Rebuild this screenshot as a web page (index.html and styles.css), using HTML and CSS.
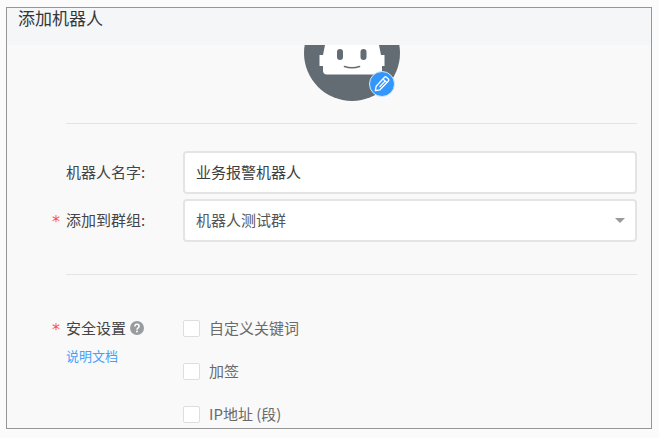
FILE: index.html
```html
<!DOCTYPE html>
<html lang="zh-CN">
<head>
    <meta charset="UTF-8">
    <meta name="viewport" content="width=device-width, initial-scale=1.0">
    <title>添加机器人</title>
    <link rel="stylesheet" href="styles.css">
</head>
<body>
    <div class="dialog">
        <h1 class="dialog-title">添加机器人</h1>

        <form class="robot-form">
            <div class="avatar-area">
                <div class="avatar">
                    <svg class="avatar-img" viewBox="0 0 96 96" aria-hidden="true">
                        <circle cx="48" cy="48" r="48" fill="#646c73"/>
                        <path d="M28 28h40q5 5 7 12l2 10h3.500v11H78v4.500q0 4-4 4H23q-4 0-4-4V61h-3.500V50H19l2-10q2-7 7-12z" fill="#fff"/>
                        <rect x="33" y="44" width="6" height="11" rx="3" fill="#646c73"/>
                        <rect x="56.500" y="44" width="6" height="11" rx="3" fill="#646c73"/>
                        <path d="M40.500 61.500q7.500 2.500 15 0" fill="none" stroke="#646c73" stroke-width="1.600" stroke-linecap="round"/>
                    </svg>
                    <button class="avatar-edit" type="button" aria-label="修改头像">
                        <svg width="26" height="26" viewBox="0 0 26 26" fill="none" stroke="#fff" stroke-width="1.300" stroke-linejoin="round">
                            <circle cx="13" cy="13" r="12.500" fill="#3296fa" stroke="#d5e8fb" stroke-width="1"/>
                            <path d="M6.300 19.700l.9-4.500 8.300-8.900q1-1 2 0l1.900 1.700q1 1 0 2L11 18.800z"/>
                            <path d="M14 8l4 3.700M15.800 10.400l-5.300 5.600"/>
                        </svg>
                    </button>
                </div>
            </div>

            <hr class="divider">

            <div class="fields">
                <label class="label" for="robotName">机器人名字:</label>
                <input class="control" id="robotName" type="text" value="业务报警机器人">

                <label class="label required" for="robotGroup">添加到群组:</label>
                <div class="select-box">
                    <select class="control" id="robotGroup">
                        <option>机器人测试群</option>
                    </select>
                </div>
            </div>

            <hr class="divider">

            <div class="security">
                <div class="security-info">
                    <div class="label required" id="securityLabel">安全设置
                        <svg class="help" viewBox="0 0 14 14" aria-hidden="true">
                            <circle cx="7" cy="7" r="7" fill="#999c9f"/>
                            <path d="M4.900 5.500q0-2.200 2.100-2.200t2.100 1.900q0 1-1 1.700T7 8.700" fill="none" stroke="#fff" stroke-width="1.500"/>
                            <circle cx="7" cy="10.600" r="1" fill="#fff"/>
                        </svg>
                    </div>
                    <a class="doc-link" href="#">说明文档</a>
                </div>
                <div class="options" role="group" aria-labelledby="securityLabel">
                    <label class="option"><input type="checkbox">自定义关键词</label>
                    <label class="option"><input type="checkbox">加签</label>
                    <label class="option"><input type="checkbox">IP地址 (段)</label>
                </div>
            </div>
        </form>
    </div>
</body>
</html>
```

FILE: styles.css
```css
* {
    box-sizing: border-box;
}

body {
    margin: 0;
    padding: 7px 7px 0 6px;
    background-color: #fbfbfb;
    color: #444;
    font-family: "Noto Sans CJK SC", "Noto Sans", sans-serif;
    font-size: 15px;
    line-height: 22px;
}

.dialog {
    border: 1px solid #969696;
    background-color: #f9f9f9;
}

.dialog-title {
    margin: 0;
    padding: 0 11px 17px;
    background-color: #f4f6f8;
    color: #333537;
    font-size: 17px;
    font-weight: normal;
    line-height: 20px;
}

.robot-form {
    padding: 0 14px 3px 45px;
}

/* the avatar is scrolled partly under the title bar */
.avatar-area {
    display: flex;
    justify-content: center;
    align-items: flex-end;
    height: 56px;
    padding-left: 14px;
    overflow: hidden;
}

.avatar {
    position: relative;
    flex: none;
    width: 96px;
    height: 96px;
}

.avatar-img {
    display: block;
    width: 100%;
}

.avatar-edit {
    position: absolute;
    right: 5px;
    bottom: 4px;
    width: 26px;
    height: 26px;
    padding: 0;
    border: none;
    border-radius: 50%;
    background: none;
    cursor: pointer;
}

.avatar-edit svg {
    display: block;
}

.divider {
    height: 1px;
    margin: 32px 0 32px 14px;
    border: none;
    background-color: #e4e4e4;
}

.avatar-area + .divider {
    margin-top: 22px;
    margin-bottom: 27px;
}

.fields,
.security {
    display: grid;
    grid-template-columns: 131px 1fr;
}

.fields {
    row-gap: 5px;
    align-items: center;
}

.label {
    display: flex;
    align-items: center;
    padding-left: 14px;
}

.fields .label {
    padding-bottom: 2px;
}

.required {
    padding-left: 0;
}

.required::before {
    content: "*";
    width: 14px;
    padding-top: 4px;
    color: #ff4d55;
    font-family: "DejaVu Sans", sans-serif;
    font-size: 16px;
    line-height: 18px;
}

.control {
    display: block;
    width: 100%;
    height: 43px;
    padding: 0 11px 2px;
    border: 2px solid #e4e4e4;
    border-radius: 4px;
    background-color: #fff;
    color: #3c3d3e;
    font: inherit;
    appearance: none;
}

.select-box {
    position: relative;
}

.select-box .control {
    color: #555;
}

.select-box::after {
    content: "";
    position: absolute;
    top: 19px;
    right: 12px;
    border: 5px solid transparent;
    border-top-color: #999;
    border-bottom: none;
    pointer-events: none;
}

.security {
    padding-top: 10px;
}

.help {
    width: 14px;
    height: 14px;
    margin-left: 4px;
}

.doc-link {
    display: block;
    margin: 6px 0 0 14px;
    color: #46a0fa;
    font-size: 13px;
    text-decoration: none;
}

.options {
    display: grid;
    row-gap: 21px;
}

.option {
    display: flex;
    align-items: center;
    gap: 9px;
    color: #6a6a6a;
}

.option input {
    width: 17px;
    height: 17px;
    margin: 0;
    border: 1px solid #dedede;
    border-radius: 2px;
    background-color: #fff;
    appearance: none;
}

.option input:checked {
    background-color: #3296fa;
}
```
